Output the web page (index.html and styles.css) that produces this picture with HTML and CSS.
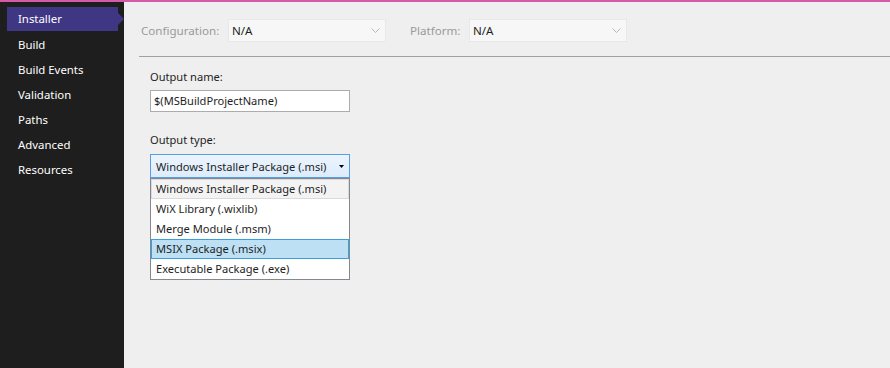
FILE: index.html
```html
<!DOCTYPE html>
<html lang="en">
<head>
  <meta charset="UTF-8" />
  <title>Installer - Properties</title>
  <link rel="stylesheet" href="styles.css">
</head>
<body>
  <div class="accent"></div>
  <div class="page">
    <nav class="sidebar">
      <div class="nav-item active">Installer</div>
      <div class="nav-item">Build</div>
      <div class="nav-item">Build Events</div>
      <div class="nav-item">Validation</div>
      <div class="nav-item">Paths</div>
      <div class="nav-item">Advanced</div>
      <div class="nav-item">Resources</div>
    </nav>

    <main class="content">
      <div class="toolbar">
        <span class="tb-label">Configuration:</span>
        <div class="tb-combo">
          <span>N/A</span>
          <svg width="9" height="5" viewBox="0 0 9 5"><path d="M0.5 0.5 L4.5 4.5 L8.5 0.5" fill="none" stroke="#b8b8b8" stroke-width="1"/></svg>
        </div>
        <span class="tb-label platform">Platform:</span>
        <div class="tb-combo">
          <span>N/A</span>
          <svg width="9" height="5" viewBox="0 0 9 5"><path d="M0.5 0.5 L4.5 4.5 L8.5 0.5" fill="none" stroke="#b8b8b8" stroke-width="1"/></svg>
        </div>
      </div>

      <div class="form">
        <div class="field-label">Output name:</div>
        <div class="textbox">$(MSBuildProjectName)</div>

        <div class="field-label type">Output type:</div>
        <div class="combo">
          <span>Windows Installer Package (.msi)</span>
          <svg width="5" height="3" viewBox="0 0 5 3"><path d="M0 0 H5 L2.5 3 Z" fill="#000"/></svg>
        </div>
        <ul class="dropdown">
          <li class="focused">Windows Installer Package (.msi)</li>
          <li>WiX Library (.wixlib)</li>
          <li>Merge Module (.msm)</li>
          <li class="hover">MSIX Package (.msix)</li>
          <li>Executable Package (.exe)</li>
        </ul>
      </div>
    </main>
  </div>
</body>
</html>
```

FILE: styles.css
```css
* {
  box-sizing: border-box;
}

body {
  margin: 0;
  height: 368px;
  overflow: hidden;
  font-family: 'Noto Sans', 'Open Sans', sans-serif;
  font-size: 11.1px;
  background: #efefef;
  color: #1e1e1e;
}

.accent {
  height: 2px;
  background: #d65aa7;
}

.page {
  display: flex;
  height: 366px;
}

.sidebar {
  width: 124px;
  background: #1e1e1e;
  padding-top: 5px;
}

.nav-item {
  height: 25px;
  line-height: 25px;
  color: #fff;
  margin-right: 6px;
  margin-left: 7px;
  padding-left: 11px;
  font-size: 11.4px;
}

.nav-item.active {
  position: relative;
  background: #3f3783;
  height: 24px;
  line-height: 24px;
  margin-bottom: 1px;
}

.nav-item.active::after {
  content: "";
  position: absolute;
  right: -6px;
  top: 6px;
  border-left: 6px solid #3f3783;
  border-top: 6px solid transparent;
  border-bottom: 6px solid transparent;
}

.content {
  flex: 1;
  padding-top: 17px;
}

.toolbar {
  display: flex;
  align-items: center;
  padding-bottom: 14px;
  border-bottom: 1px solid #a0a0a0;
  margin-left: 15px;
  padding-left: 2px;
  font-size: 11.6px;
}

.tb-label {
  color: #9a9a9a;
  width: 87px;
}

.tb-label.platform {
  width: 59px;
  margin-left: 24px;
}

.tb-combo {
  width: 158px;
  height: 23px;
  background: #f7f7f7;
  border: 1px solid #e8e8e8;
  display: flex;
  align-items: center;
  justify-content: space-between;
  padding: 0 5px 0 3px;
  color: #1e1e1e;
}

.form {
  padding: 11px 0 0 26px;
}

.field-label {
  height: 18px;
  line-height: 18px;
  margin-bottom: 4px;
}

.field-label.type {
  margin-top: 19px;
  margin-bottom: 5px;
}

.textbox {
  width: 200px;
  height: 22px;
  line-height: 20px;
  background: #fff;
  border: 1px solid #acacac;
  padding-left: 3px;
}

.combo {
  width: 200px;
  height: 24px;
  border: 1px solid #569de5;
  background: linear-gradient(#ecf4fc, #dcecfc);
  display: flex;
  align-items: center;
  justify-content: space-between;
  padding: 0 5px 0 5px;
  white-space: nowrap;
}

.combo svg {
  flex-shrink: 0;
}

.dropdown {
  list-style: none;
  margin: 0;
  padding: 0;
  width: 200px;
  background: #fff;
  border: 1px solid #828790;
}

.dropdown li {
  height: 20px;
  line-height: 18px;
  padding-left: 4px;
  border: 1px solid transparent;
  white-space: nowrap;
}

.dropdown li.focused {
  background: #f3f3f3;
  border-color: #dadada;
}

.dropdown li.hover {
  background: #bde0f5;
  border-color: #3c9fdc;
}
```
